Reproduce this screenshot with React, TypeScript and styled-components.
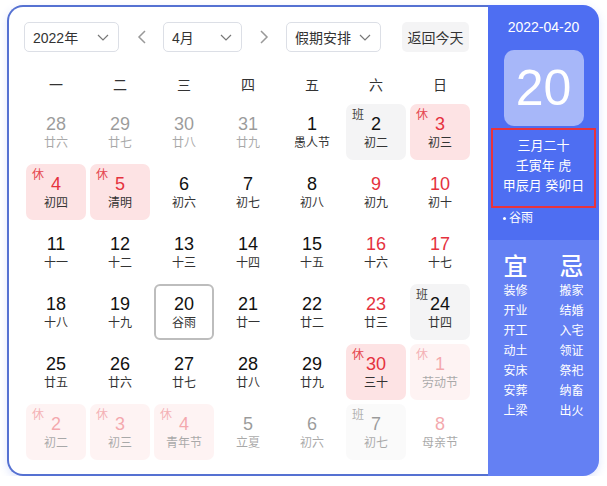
import React from 'react';
import styled, { createGlobalStyle, css } from 'styled-components';

type Kind = 'normal' | 'rest' | 'work';

interface Day {
  num: number;
  lunar: string;
  other?: boolean;
  kind?: Kind;
  red?: boolean;
  today?: boolean;
}

const weekdays = ['一', '二', '三', '四', '五', '六', '日'];

const days: Day[] = [
  { num: 28, lunar: '廿六', other: true },
  { num: 29, lunar: '廿七', other: true },
  { num: 30, lunar: '廿八', other: true },
  { num: 31, lunar: '廿九', other: true },
  { num: 1, lunar: '愚人节' },
  { num: 2, lunar: '初二', kind: 'work' },
  { num: 3, lunar: '初三', kind: 'rest', red: true },

  { num: 4, lunar: '初四', kind: 'rest', red: true },
  { num: 5, lunar: '清明', kind: 'rest', red: true },
  { num: 6, lunar: '初六' },
  { num: 7, lunar: '初七' },
  { num: 8, lunar: '初八' },
  { num: 9, lunar: '初九', red: true },
  { num: 10, lunar: '初十', red: true },

  { num: 11, lunar: '十一' },
  { num: 12, lunar: '十二' },
  { num: 13, lunar: '十三' },
  { num: 14, lunar: '十四' },
  { num: 15, lunar: '十五' },
  { num: 16, lunar: '十六', red: true },
  { num: 17, lunar: '十七', red: true },

  { num: 18, lunar: '十八' },
  { num: 19, lunar: '十九' },
  { num: 20, lunar: '谷雨', today: true },
  { num: 21, lunar: '廿一' },
  { num: 22, lunar: '廿二' },
  { num: 23, lunar: '廿三', red: true },
  { num: 24, lunar: '廿四', kind: 'work' },

  { num: 25, lunar: '廿五' },
  { num: 26, lunar: '廿六' },
  { num: 27, lunar: '廿七' },
  { num: 28, lunar: '廿八' },
  { num: 29, lunar: '廿九' },
  { num: 30, lunar: '三十', kind: 'rest', red: true },
  { num: 1, lunar: '劳动节', kind: 'rest', red: true, other: true },

  { num: 2, lunar: '初二', kind: 'rest', red: true, other: true },
  { num: 3, lunar: '初三', kind: 'rest', red: true, other: true },
  { num: 4, lunar: '青年节', kind: 'rest', red: true, other: true },
  { num: 5, lunar: '立夏', other: true },
  { num: 6, lunar: '初六', other: true },
  { num: 7, lunar: '初七', kind: 'work', other: true },
  { num: 8, lunar: '母亲节', red: true, other: true },
];

const yi = ['装修', '开业', '开工', '动土', '安床', '安葬', '上梁'];
const ji = ['搬家', '结婚', '入宅', '领证', '祭祀', '纳畜', '出火'];

const ChevronDown = () => (
  <svg width="12" height="7" viewBox="0 0 12 7" fill="none">
    <polyline points="1,1 6,6 11,1" stroke="#777" strokeWidth="1.2" />
  </svg>
);

const Arrow: React.FC<{ dir: 'left' | 'right' }> = ({ dir }) => (
  <svg width="9" height="14" viewBox="0 0 9 14" fill="none">
    <polyline
      points={dir === 'left' ? '8,1 2,7 8,13' : '1,1 7,7 1,13'}
      stroke="#999"
      strokeWidth="1.5"
    />
  </svg>
);

const App: React.FC = () => {
  return (
    <>
      <GlobalStyle />
      <Wrapper>
        <Main>
          <Toolbar>
            <Select $width={95}>
              <span>2022年</span>
              <ChevronDown />
            </Select>
            <ArrowButton>
              <Arrow dir="left" />
            </ArrowButton>
            <Select $width={79}>
              <span>4月</span>
              <ChevronDown />
            </Select>
            <ArrowButton>
              <Arrow dir="right" />
            </ArrowButton>
            <Select $width={95}>
              <span>假期安排</span>
              <ChevronDown />
            </Select>
            <TodayButton>返回今天</TodayButton>
          </Toolbar>
          <WeekHeader>
            {weekdays.map((w) => (
              <WeekLabel key={w}>{w}</WeekLabel>
            ))}
          </WeekHeader>
          <Grid>
            {days.map((d, i) => (
              <Cell key={i} $kind={d.kind || 'normal'} $other={!!d.other} $today={!!d.today}>
                {d.kind === 'rest' && <Badge $kind="rest">休</Badge>}
                {d.kind === 'work' && <Badge $kind="work">班</Badge>}
                <DayNum $red={!!d.red}>{d.num}</DayNum>
                <Lunar>{d.lunar}</Lunar>
              </Cell>
            ))}
          </Grid>
        </Main>
        <Side>
          <SideTop>
            <DateLine>2022-04-20</DateLine>
            <BigDay>20</BigDay>
            <LunarBox>
              <div>三月二十</div>
              <div>壬寅年 虎</div>
              <div>甲辰月 癸卯日</div>
            </LunarBox>
            <Term>
              <Dot />
              谷雨
            </Term>
          </SideTop>
          <SideBottom>
            <Column>
              <ColTitle>宜</ColTitle>
              {yi.map((t) => (
                <ColItem key={t}>{t}</ColItem>
              ))}
            </Column>
            <Column>
              <ColTitle>忌</ColTitle>
              {ji.map((t) => (
                <ColItem key={t}>{t}</ColItem>
              ))}
            </Column>
          </SideBottom>
        </Side>
      </Wrapper>
    </>
  );
};

const GlobalStyle = createGlobalStyle`
  body {
    margin: 0;
    background: #fff;
    font-family: "Liberation Sans", "Noto Sans CJK SC", sans-serif;
    color: #333;
  }
  * {
    box-sizing: border-box;
  }
`;

const Wrapper = styled.div`
  display: flex;
  width: 592px;
  height: 471px;
  margin: 5px 0 0 7px;
  border-radius: 16px;
  box-shadow: 0 3px 8px rgba(78, 110, 242, 0.18);
`;

const Main = styled.div`
  flex: 1;
  border: 2px solid #5571d2;
  border-right: none;
  border-radius: 16px 0 0 16px;
  padding: 15px 0 0 15px;
  background: #fff;
`;

const Toolbar = styled.div`
  display: flex;
  align-items: center;
  gap: 8px;
  height: 30px;
  margin-bottom: 12px;
`;

const Select = styled.div<{ $width: number }>`
  width: ${(p) => p.$width}px;
  height: 30px;
  border: 1px solid #dcdfe6;
  border-radius: 5px;
  display: flex;
  align-items: center;
  justify-content: space-between;
  padding: 0 9px 0 8px;
  font-size: 14px;
  color: #333;
`;

const ArrowButton = styled.div`
  width: 28px;
  height: 30px;
  display: flex;
  align-items: center;
  justify-content: center;
`;

const TodayButton = styled.div`
  margin-left: 13px;
  width: 67px;
  height: 30px;
  border-radius: 5px;
  background: #f4f4f5;
  display: flex;
  align-items: center;
  justify-content: center;
  font-size: 14px;
  color: #333;
`;

const WeekHeader = styled.div`
  display: grid;
  grid-template-columns: repeat(7, 60px);
  column-gap: 4px;
  padding: 0 2px;
  height: 40px;
  align-items: center;
`;

const WeekLabel = styled.div`
  text-align: center;
  font-size: 14px;
  color: #333;
`;

const Grid = styled.div`
  display: grid;
  grid-template-columns: repeat(7, 60px);
  grid-auto-rows: 56px;
  gap: 4px;
  padding: 0 2px;
`;

const Cell = styled.div<{ $kind: Kind; $other: boolean; $today: boolean }>`
  position: relative;
  display: flex;
  flex-direction: column;
  align-items: center;
  padding-top: 7px;
  border: 2px solid ${(p) => (p.$today ? '#bdbdbd' : 'transparent')};
  border-radius: ${(p) => (p.$today ? '6px' : '7px')};
  background: ${(p) =>
    p.$kind === 'rest' ? '#fde3e4' : p.$kind === 'work' ? '#f4f4f5' : 'transparent'};
  ${(p) =>
    p.$other &&
    css`
      opacity: 0.42;
    `}
`;

const Badge = styled.span<{ $kind: Kind }>`
  position: absolute;
  top: 1px;
  left: 4px;
  font-size: 12px;
  line-height: 16px;
  color: ${(p) => (p.$kind === 'rest' ? '#e5474f' : '#444')};
`;

const DayNum = styled.div<{ $red: boolean }>`
  font-size: 18px;
  line-height: 22px;
  color: ${(p) => (p.$red ? '#e5323e' : '#111')};
`;

const Lunar = styled.div`
  font-size: 12px;
  line-height: 16px;
  color: #333;
`;

const Side = styled.div`
  width: 111px;
  display: flex;
  flex-direction: column;
  background: #4e6ef2;
  border-radius: 0 16px 16px 0;
  overflow: hidden;
  color: #fff;
`;

const SideTop = styled.div`
  display: flex;
  flex-direction: column;
  align-items: center;
  padding-top: 12px;
`;

const DateLine = styled.div`
  font-size: 14px;
  line-height: 20px;
`;

const BigDay = styled.div`
  width: 80px;
  height: 76px;
  margin-top: 13px;
  border-radius: 10px;
  background: rgba(255, 255, 255, 0.5);
  display: flex;
  align-items: center;
  justify-content: center;
  font-size: 50px;
`;

const LunarBox = styled.div`
  width: 105px;
  margin-top: 2px;
  border: 2px solid #e8333d;
  padding: 6px 0 10px;
  text-align: center;
  font-size: 13px;
  line-height: 20px;
`;

const Term = styled.div`
  align-self: stretch;
  display: flex;
  align-items: center;
  gap: 3px;
  padding: 2px 0 14px 15px;
  font-size: 12px;
  line-height: 16px;
`;

const Dot = styled.span`
  width: 3px;
  height: 3px;
  border-radius: 50%;
  background: #fff;
`;

const SideBottom = styled.div`
  flex: 1;
  background: rgba(255, 255, 255, 0.13);
  display: grid;
  grid-template-columns: 40px 40px;
  column-gap: 16px;
  justify-content: center;
  align-content: start;
  padding-top: 12px;
`;

const Column = styled.div`
  display: flex;
  flex-direction: column;
  align-items: center;
`;

const ColTitle = styled.div`
  font-size: 24px;
  line-height: 29px;
  font-weight: 500;
`;

const ColItem = styled.div`
  font-size: 12px;
  line-height: 20px;
`;

export default App;
